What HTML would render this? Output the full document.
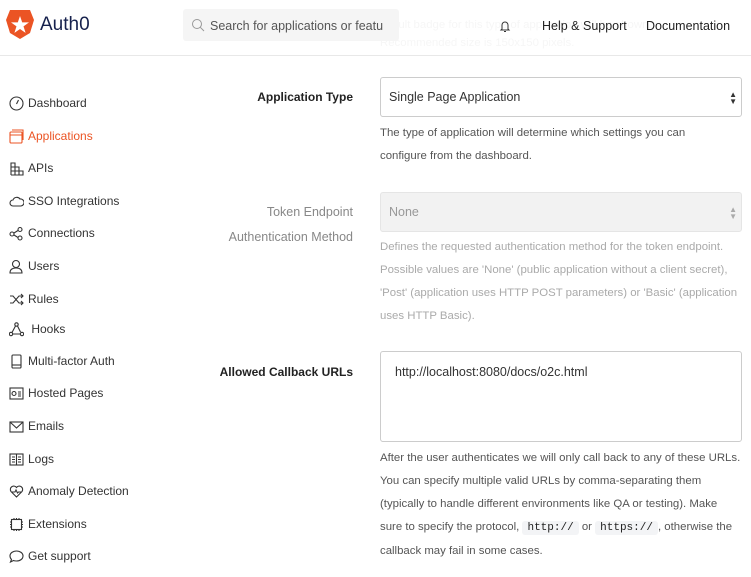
<!DOCTYPE html>
<html><head><meta charset="utf-8"><style>
*{margin:0;padding:0;box-sizing:border-box}
body{width:751px;height:577px;overflow:hidden;background:#fff;font-family:"Liberation Sans",sans-serif;color:#333;position:relative}
.a{position:absolute;white-space:nowrap}
.hdr{position:absolute;left:0;top:0;width:751px;height:56px;border-bottom:1px solid #e8e8e8;background:rgba(255,255,255,0.8)}
.nav{position:absolute;left:9px;font-size:12px;color:#333;display:flex;align-items:center;height:16px}
.nav svg{display:block;width:15px;height:15px;margin-right:4px;fill:none;stroke:#333;stroke-width:1.1}
.lbl{position:absolute;right:398px;font-size:12px;font-weight:bold;color:#222;text-align:right}
.help{position:absolute;left:380px;font-size:11.4px;color:#555;line-height:23px;width:371px;white-space:nowrap}
.box{position:absolute;left:380px;width:362px;border:1px solid #ccc;border-radius:3px;font-size:12.5px;padding-left:8px}
code{font-family:"Liberation Mono",monospace;background:#f3f4f6;padding:1px 5px;border-radius:3px;font-size:11px;color:#222}
</style></head><body>
<div class="a" style="left:392px;top:19px;font-size:11.4px;color:#d0d0d0">ault badge for this type of application will be shown.</div>
<div class="a" style="left:380px;top:37px;font-size:11.4px;color:#d0d0d0">Recommended size is 150x150 pixels.</div>
<div class="hdr"></div>
<svg class="a" style="left:6px;top:10px" width="28" height="29" viewBox="0 0 28 29"><path d="M4 0H24L28 10 24 23 14 29 4 23 0 10Z" fill="#eb5424"/><path d="M14 6l2.2 6.4H23l-5.5 4 2.1 6.5L14 19l-5.6 3.9 2.1-6.5-5.5-4h6.8Z" fill="#fff"/></svg>
<div class="a" style="left:40px;top:14px;font-size:19px;color:#16214d">Auth0</div>
<div class="a" style="left:183px;top:9px;width:216px;height:32px;background:#f5f5f5;border-radius:3px"></div>
<svg class="a" style="left:191px;top:18px" width="14" height="14" viewBox="0 0 14 14"><circle cx="6" cy="6" r="4.5" fill="none" stroke="#999" stroke-width="1"/><path d="M9.3 9.3L13 13" stroke="#999"/></svg>
<div class="a" style="left:210px;top:19px;font-size:12.5px;color:#555">Search for applications or featu</div>
<svg class="a" style="left:499px;top:20px" width="12" height="13" viewBox="0 0 12 13"><path d="M3 9V5a3 3 0 016 0v4l1 1H2z M5 11.5h2" fill="none" stroke="#333"/></svg>
<div class="a" style="left:542px;top:19px;font-size:12.5px;color:#222">Help &amp; Support</div>
<div class="a" style="left:646px;top:19px;font-size:12.5px;color:#222">Documentation</div>

<div class="nav" style="top:95px"><svg viewBox="0 0 15 15"><circle cx="7.5" cy="7.5" r="6.5"/><path d="M7.5 8L9.5 4"/></svg>Dashboard</div>
<div class="nav" style="top:128px;color:#eb5424"><svg viewBox="0 0 15 15" style="stroke:#eb5424"><rect x="1" y="3" width="12" height="11" rx="1"/><path d="M1 6h12M3 1h11v10"/></svg>Applications</div>
<div class="nav" style="top:160px"><svg viewBox="0 0 15 15"><path d="M2 14V2h4v12M2 6h8v8M2 10h12v4H2"/></svg>APIs</div>
<div class="nav" style="top:193px"><svg viewBox="0 0 15 15"><path d="M4 12a3 3 0 010-6 4 4 0 017-1 3.5 3.5 0 011 7z"/></svg>SSO Integrations</div>
<div class="nav" style="top:225px"><svg viewBox="0 0 15 15"><circle cx="3" cy="8" r="2"/><circle cx="11" cy="3.5" r="2"/><circle cx="11" cy="12" r="2"/><path d="M5 7l4-2.5M5 9l4 2.5"/></svg>Connections</div>
<div class="nav" style="top:258px"><svg viewBox="0 0 15 15"><circle cx="7" cy="5" r="3.5"/><path d="M1 14c0-4 3-5 6-5s6 1 6 5z"/></svg>Users</div>
<div class="nav" style="top:291px"><svg viewBox="0 0 15 15"><path d="M1 4h3l6 7h4M1 11h3l6-7h4M12 2l2 2-2 2M12 9l2 2-2 2"/></svg>Rules</div>
<div class="nav" style="top:321px"><svg viewBox="0 0 15 15"><circle cx="7.5" cy="2.5" r="1.7"/><circle cx="2" cy="12" r="1.7"/><circle cx="13" cy="12" r="1.7"/><path d="M6.5 4L3 10.5M8.5 4l3 6M4 12h7"/></svg>&nbsp;Hooks</div>
<div class="nav" style="top:353px"><svg viewBox="0 0 15 15"><rect x="3" y="1" width="9" height="13" rx="1"/><path d="M3 11h9"/></svg>Multi-factor Auth</div>
<div class="nav" style="top:385px"><svg viewBox="0 0 15 15"><rect x="1" y="2" width="13" height="11"/><circle cx="5" cy="7.5" r="2"/><path d="M9 6h3M9 8h3M9 10h3"/></svg>Hosted Pages</div>
<div class="nav" style="top:418px"><svg viewBox="0 0 15 15"><rect x="1" y="3" width="13" height="10"/><path d="M1 3l6.5 6L14 3"/></svg>Emails</div>
<div class="nav" style="top:451px"><svg viewBox="0 0 15 15"><rect x="1" y="2" width="13" height="11"/><path d="M7.5 2v11M3 5h3M3 7.5h3M3 10h3M9 5h3M9 7.5h3M9 10h3"/></svg>Logs</div>
<div class="nav" style="top:483px"><svg viewBox="0 0 15 15"><path d="M7.5 13L2 7.5a3 3 0 015.5-4 3 3 0 015.5 4z M3 8h3l1-2 1.5 3 1-1H12"/></svg>Anomaly Detection</div>
<div class="nav" style="top:516px"><svg viewBox="0 0 15 15"><rect x="2.5" y="2.5" width="10" height="10"/><path d="M5 1v1.5M7.5 1v1.5M10 1v1.5M5 12.5V14M7.5 12.5V14M10 12.5V14M1 5h1.5M1 7.5h1.5M1 10h1.5M12.5 5H14M12.5 7.5H14M12.5 10H14"/></svg>Extensions</div>
<div class="nav" style="top:548px"><svg viewBox="0 0 15 15"><path d="M7.5 2C11 2 14 4 14 7s-3 5-6.5 5c-1 0-2 0-3-.5L1.5 13l1-2.5C1.5 9.5 1 8.3 1 7c0-3 3-5 6.5-5z"/></svg>Get support</div>

<div class="lbl" style="top:90px">Application Type</div>
<div class="box" style="top:77px;height:40px;line-height:38px;color:#333">Single Page Application<span style="position:absolute;right:4px;font-size:8px;line-height:7px;top:13px;color:#333">▲<br>▼</span></div>
<div class="help" style="top:122px">The type of application will determine which settings you can<br>configure from the dashboard.</div>

<div class="lbl" style="top:205px;color:#888;font-weight:normal;font-size:12.5px">Token Endpoint</div>
<div class="lbl" style="top:230px;color:#888;font-weight:normal;font-size:12.5px">Authentication Method</div>
<div class="box" style="top:192px;height:40px;line-height:38px;background:#f2f2f2;border-color:#e5e5e5;color:#999">None<span style="position:absolute;right:4px;font-size:8px;line-height:7px;top:13px;color:#aaa">▲<br>▼</span></div>
<div class="help" style="top:236px;color:#aaa">Defines the requested authentication method for the token endpoint.<br>Possible values are 'None' (public application without a client secret),<br>'Post' (application uses HTTP POST parameters) or 'Basic' (application<br>uses HTTP Basic).</div>

<div class="lbl" style="top:365px">Allowed Callback URLs</div>
<div class="box" style="top:351px;height:91px;padding:13px 14px;color:#333">http://localhost:8080/docs/o2c.html</div>
<div class="help" style="top:447px">After the user authenticates we will only call back to any of these URLs.<br>You can specify multiple valid URLs by comma-separating them<br>(typically to handle different environments like QA or testing). Make<br>sure to specify the protocol, <code>http://</code> or <code>https://</code>, otherwise the<br>callback may fail in some cases.</div>
</body></html>
